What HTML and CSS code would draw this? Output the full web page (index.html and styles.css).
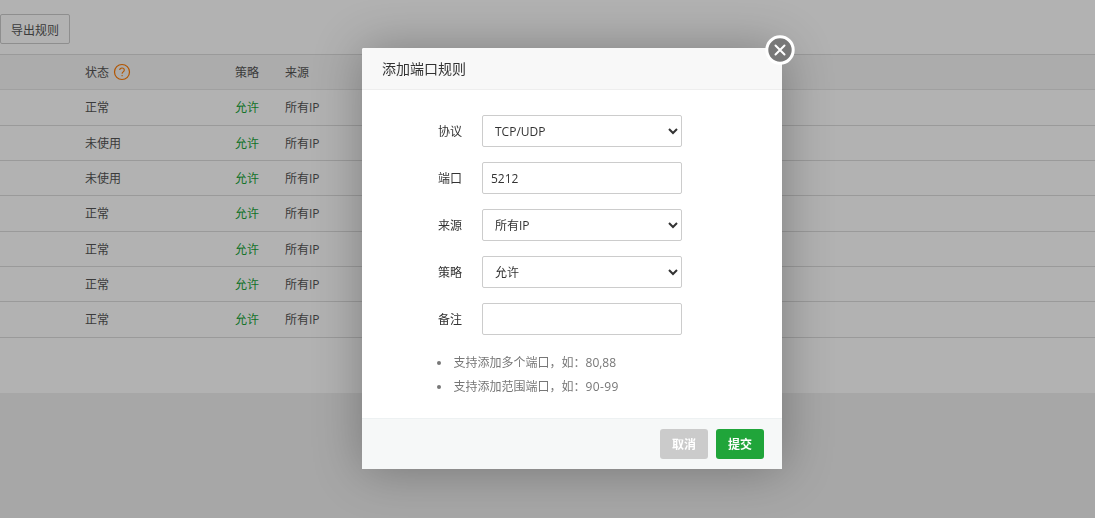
FILE: index.html
```html
<!DOCTYPE html>
<html lang="zh-CN">
<head>
    <meta charset="UTF-8">
    <meta name="viewport" content="width=device-width, initial-scale=1.0">
    <title>添加端口规则</title>
    <link rel="stylesheet" href="styles.css">
</head>
<body>
    <div class="panel">
        <div class="toolbar">
            <button class="btn-export">导出规则</button>
        </div>
        <div class="table">
            <div class="row head">
                <div class="status">状态
                    <svg class="help" width="18" height="18" viewBox="0 0 18 18" fill="none" stroke="#ff7a00">
                        <circle cx="9" cy="9" r="7.5" stroke-width="1.2"/>
                        <path d="M6.7 7.1C6.7 5.8 7.6 5 9 5s2.3.8 2.3 2c0 1.9-2.2 1.8-2.2 3.7M9.1 12v1.3" stroke-width="1.1"/>
                    </svg>
                </div>
                <div class="policy">策略</div>
                <div class="source">来源</div>
            </div>
            <div class="row">
                <div class="status">正常</div>
                <div class="policy allow">允许</div>
                <div class="source">所有IP</div>
            </div>
            <div class="row">
                <div class="status">未使用</div>
                <div class="policy allow">允许</div>
                <div class="source">所有IP</div>
            </div>
            <div class="row">
                <div class="status">未使用</div>
                <div class="policy allow">允许</div>
                <div class="source">所有IP</div>
            </div>
            <div class="row">
                <div class="status">正常</div>
                <div class="policy allow">允许</div>
                <div class="source">所有IP</div>
            </div>
            <div class="row">
                <div class="status">正常</div>
                <div class="policy allow">允许</div>
                <div class="source">所有IP</div>
            </div>
            <div class="row">
                <div class="status">正常</div>
                <div class="policy allow">允许</div>
                <div class="source">所有IP</div>
            </div>
            <div class="row">
                <div class="status">正常</div>
                <div class="policy allow">允许</div>
                <div class="source">所有IP</div>
            </div>
        </div>
    </div>

    <div class="mask"></div>

    <div class="dialog">
        <div class="dialog-title">添加端口规则</div>
        <svg class="dialog-close" width="30" height="30" viewBox="0 0 30 30">
            <circle cx="15" cy="15" r="13.2" fill="#787878" stroke="#fff" stroke-width="3"/>
            <path d="M10.5 10.5l9 9M19.5 10.5l-9 9" stroke="#fff" stroke-width="2" stroke-linecap="round"/>
        </svg>
        <form class="dialog-body">
            <div class="line">
                <label for="protocol">协议</label>
                <select id="protocol" class="field">
                    <option>TCP/UDP</option>
                </select>
            </div>
            <div class="line">
                <label for="port">端口</label>
                <input type="text" id="port" class="field" value="5212">
            </div>
            <div class="line">
                <label for="source">来源</label>
                <select id="source" class="field">
                    <option>所有IP</option>
                </select>
            </div>
            <div class="line">
                <label for="policy">策略</label>
                <select id="policy" class="field">
                    <option>允许</option>
                </select>
            </div>
            <div class="line">
                <label for="remark">备注</label>
                <input type="text" id="remark" class="field">
            </div>
            <ul class="tips">
                <li>支持添加多个端口，如：<span>80,88</span></li>
                <li>支持添加范围端口，如：<span class="range">90-99</span></li>
            </ul>
        </form>
        <div class="dialog-footer">
            <button class="btn cancel">取消</button>
            <button class="btn submit">提交</button>
        </div>
    </div>
</body>
</html>
```
FILE: styles.css
```css
* {
    box-sizing: border-box;
}

body {
    margin: 0;
    height: 100vh;
    overflow: hidden;
    background: #f0f0f0;
    color: #555;
    font-family: "Open Sans", "Noto Sans CJK SC", sans-serif;
    font-size: 12px;
}

button, input, select {
    font-family: inherit;
    font-size: 12px;
}

.panel {
    height: 393px;
    background: #fff;
}

.toolbar {
    height: 54px;
    padding-top: 14px;
}

.btn-export {
    display: block;
    width: 70px;
    height: 30px;
    padding: 1px 0 0;
    border: 1px solid #ccc;
    border-radius: 2px;
    background: #fff;
    color: #555;
}

.table {
    border-top: 1px solid #ddd;
}

.row {
    display: flex;
    align-items: center;
    height: 35.33px;
    padding: 0 0 0.6px 85px;
    border-bottom: 1px solid #ddd;
}

.head {
    height: 35.4px;
    padding-bottom: 0;
    background: #f6f6f6;
    border-bottom-color: #e6e6e6;
}

.status {
    display: flex;
    align-items: center;
    width: 150px;
}

.help {
    margin-left: 4px;
}

.policy {
    width: 50px;
}

.allow {
    color: #20a53a;
}

.mask {
    position: fixed;
    inset: 0;
    background: rgba(0,0,0,0.3);
}

.dialog {
    position: absolute;
    left: 362px;
    top: 48px;
    width: 420px;
    height: 421px;
    display: flex;
    flex-direction: column;
    background: #fff;
    color: #333;
    border-radius: 2px 2px 0 0;
    box-shadow: 1px 1px 50px rgba(0,0,0,0.3);
}

.dialog-title {
    height: 42px;
    padding-left: 20px;
    line-height: 42px;
    font-size: 14px;
    background: #f8f8f8;
    border-bottom: 1px solid #eee;
    border-radius: 2px 2px 0 0;
}

.dialog-close {
    position: absolute;
    right: -13px;
    top: -13px;
}

.dialog-body {
    flex: 1;
    padding-top: 25px;
}

.line {
    display: flex;
    align-items: center;
    gap: 20px;
    margin-bottom: 15px;
}

.line label {
    width: 100px;
    text-align: right;
}

.field {
    width: 200px;
    height: 32px;
    padding: 0 8px;
    border: 1px solid #ccc;
    border-radius: 2px;
    background: #fff;
    color: #333;
}

select.field {
    padding: 0 0 0 8px;
}

.tips {
    margin: 16px 0 0;
    padding-left: 75px;
    line-height: 24px;
    color: #777;
    list-style: none;
}

.tips li {
    display: flex;
    align-items: center;
}

.tips li::before {
    content: "";
    width: 4px;
    height: 4px;
    margin-right: 12.5px;
    border-radius: 50%;
    background: #777;
}

.range {
    letter-spacing: 0.4px;
}

.dialog-footer {
    display: flex;
    justify-content: flex-end;
    align-items: center;
    gap: 8px;
    height: 51px;
    padding-right: 18px;
    background: #f6f8f8;
    border-top: 1px solid #edf1f2;
}

.btn {
    width: 48px;
    height: 30px;
    padding: 0 0 1px;
    border: none;
    border-radius: 3px;
    color: #fff;
    font-weight: bold;
}

.cancel {
    background: #cbcbcb;
}

.submit {
    background: #20a53a;
}
```
